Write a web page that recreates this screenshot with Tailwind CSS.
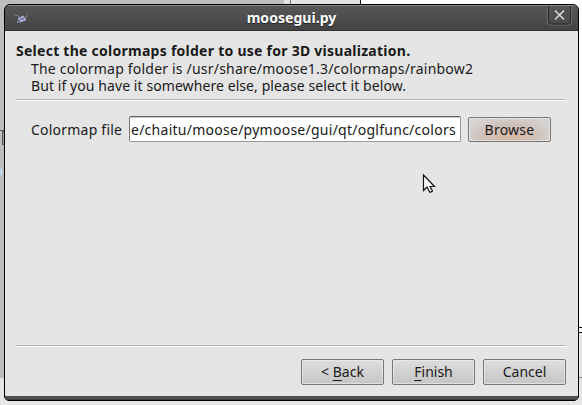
<!DOCTYPE html>
<html lang="en"><head><meta charset="utf-8"><title>moosegui.py</title>
<script src="https://cdn.jsdelivr.net/npm/@tailwindcss/browser@4"></script></head>
<body class="relative w-[582px] h-[405px] overflow-hidden bg-[#e6e6e6] font-['Noto_Sans',sans-serif] text-[14px] text-[#1a1a1a] whitespace-nowrap">
<!-- desktop behind the dialog -->
<svg class="absolute inset-0" width="582" height="405" shape-rendering="crispEdges">
<path fill="#bdbdbd" d="M0 0h284v378H0z"/><path fill="#e3e3e3" d="M284 0h76v20h-76z"/><path fill="#777" d="M290 0h1v20h-1z"/><path fill="#fff" d="M361 0h221v332H361z"/><path fill="#111" d="M360 0h1v20h-1zM579 327h3v1h-3zM579 332h3v1h-3z"/><path fill="#888" d="M579 377h3v1h-3z"/>
<path fill="#555" d="M0 130h4v1H0zM2 131h2v14H2z"/><path fill="#999" d="M3 132h1v12H3z"/><path fill="#a9cbef" d="M0 167h1v10H0z"/><path fill="#dceaf5" d="M1 169h1v6H1z"/>
</svg>
<main class="absolute left-[4px] top-[4px] w-[575px] h-[397px] rounded-t-[6px] rounded-b-[5px] border border-black bg-[#4c4c4c] overflow-hidden flex flex-col">
<header class="relative h-[26px] shrink-0 border-t border-t-[#858585] border-b border-b-[#303030] bg-linear-to-b from-[#565656] to-[#444] flex items-center justify-center">
<svg class="absolute left-[9px] top-[7px]" width="16" height="12" viewBox="0 0 16 12"><path d="M0 1l2 1M1 3l2-1M12 2l2-1M11 4l3-1" stroke="#85858c" stroke-width=".8"/><path d="M3 2l3 3M7 3l2 2M4 8l-1 1h4M9 8l3-1" stroke="#9595b4" fill="none"/><ellipse cx="8" cy="6" rx="4" ry="2" fill="#a9a9d5"/><path d="M6 6h4" stroke="#55559b"/><path d="M8 4l2-1M6 8h3" stroke="#d0d0e2"/></svg>
<h1 class="relative text-white font-bold text-[14px] leading-[18px] tracking-[0.05px] [text-shadow:0_1px_1px_#222]">moosegui.py</h1>
<svg class="absolute left-[541px] top-0" width="28" height="20" viewBox="0 0 28 20" fill="none"><path d="M1.500 0v16q0 3 3 3h18q3 0 3-3V0" stroke="#6b6b6b"/><path d="M2.500 0v15q0 3 3 3h16q3 0 3-3V0" stroke="#292929"/><path d="M9 4.500l9 9m0-9l-9 9" stroke="#dedede" stroke-width="1.500"/></svg>
</header>
<section class="h-[365px] shrink-0 bg-[#e5e5e5] flex flex-col px-[11px] pt-[11px]">
<h2 class="font-bold leading-[18px] h-[18px] tracking-[0.26px]">Select the colormaps folder to use for 3D visualization.</h2>
<p class="pl-[15px] leading-[18px] h-[18px] tracking-[0.2px]">The colormap folder is /usr/share/moose1.3/colormaps/rainbow2</p>
<p class="pl-[15px] leading-[16px] h-[17px] tracking-[0.08px]">But if you have it somewhere else, please select it below.</p>
<div class="mt-[4px] w-[550px] h-[2px] border-t border-t-[#b4b4b4] bg-white"></div>
<div class="mt-[15px] pl-[15px] h-[26px] flex items-center">
<label class="w-[98px] leading-[24px] pt-[2px] tracking-[0.22px]">Colormap file</label>
<div class="w-[332px] h-[26px] rounded-[2px] border border-[#999] border-t-[#666] border-l-[#777] bg-white shadow-[inset_0_1px_0_#ccc] overflow-hidden leading-[26px] pl-px tracking-[0.26px]">e/chaitu/moose/pymoose/gui/qt/oglfunc/colors</div>
<button class="ml-[7px] w-[83px] h-[25px] mt-px rounded-[2px] border border-[#777] bg-[radial-gradient(ellipse_at_50%_85%,#d8b9a6,#d0c1b8_45%,#d4d0ce_75%,#d8d8d8)] shadow-[inset_0_0_0_1px_#f2eeeb99] leading-[23px] text-center tracking-[0.25px]">Browse</button>
</div>
<div class="mt-[203px] w-[550px] h-[2px] border-t border-t-[#b4b4b4] bg-white"></div>
<footer class="mt-[12px] w-[550px] flex justify-end gap-[8px]">
<button class="w-[83px] h-[26px] rounded-[2px] border border-[#777] bg-linear-to-b from-[#dedede] to-[#c5c5c5] shadow-[inset_0_0_0_1px_#eeeeeeaa] leading-[24px]">&lt; <u class="underline-offset-[3px] decoration-1">B</u>ack</button>
<button class="w-[83px] h-[26px] rounded-[2px] border border-[#777] bg-linear-to-b from-[#dedede] to-[#c5c5c5] shadow-[inset_0_0_0_1px_#eeeeeeaa] leading-[24px]"><u class="underline-offset-[3px] decoration-1">F</u>inish</button>
<button class="w-[83px] h-[26px] rounded-[2px] border border-[#777] bg-linear-to-b from-[#dedede] to-[#c5c5c5] shadow-[inset_0_0_0_1px_#eeeeeeaa] leading-[24px]">Cancel</button>
</footer>
</section>
<div class="h-[4px] bg-[#505050] border-b border-b-[#3d3d3d]"></div>
</main>
<svg class="absolute left-[422px] top-[173px]" width="15" height="22" viewBox="0 0 15 22"><path d="M1.500 2v15.500l3.500-3.500 3 5.500 2.500-1.500-2.500-4.500h4.500z" fill="#fff" stroke="#111" stroke-width="1.200"/></svg>
</body></html>
